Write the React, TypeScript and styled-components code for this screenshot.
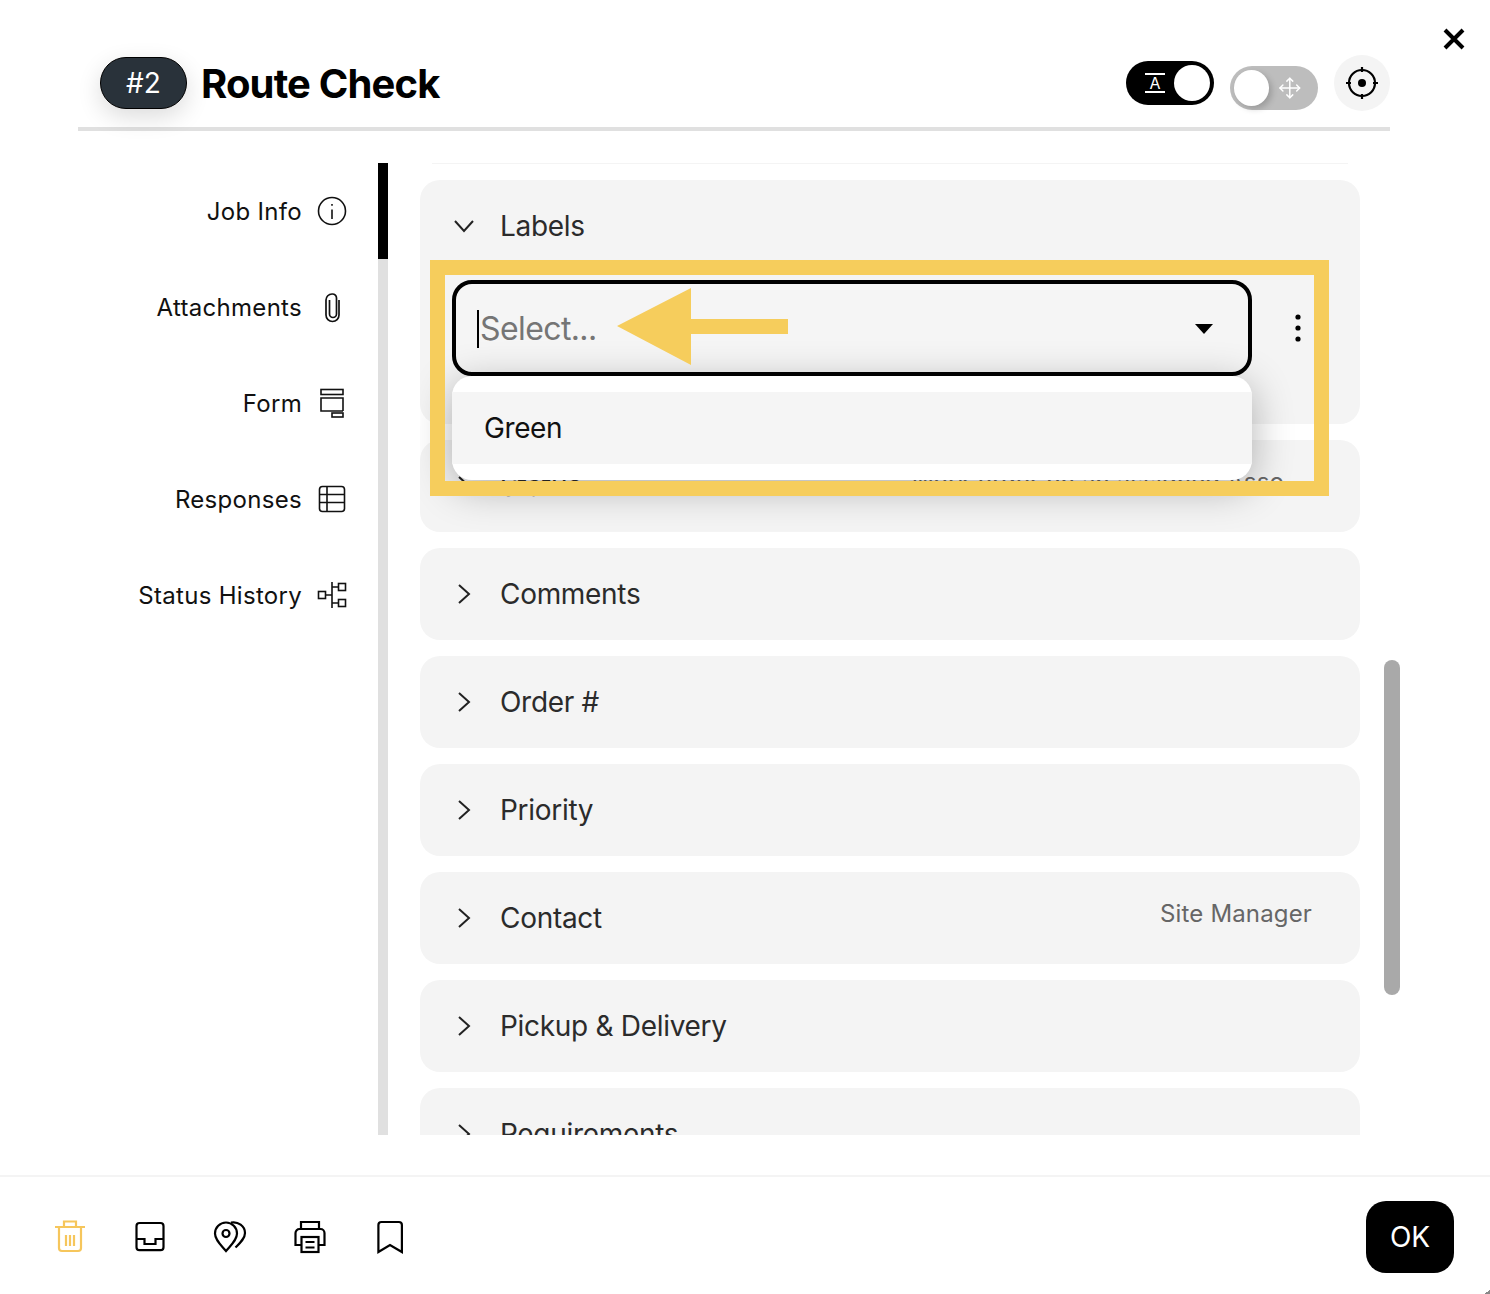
import React from 'react'
import styled, { createGlobalStyle } from 'styled-components'
import { Move } from 'lucide-react'

const GlobalStyle = createGlobalStyle`
  html, body {
    margin: 0;
    padding: 0;
    background: #fff;
  }
  * {
    box-sizing: border-box;
  }
`

const Page = styled.div`
  position: relative;
  width: 1490px;
  height: 1294px;
  overflow: hidden;
  background: #fff;
  color: #000;
  font-family: Inter, 'Liberation Sans', sans-serif;
`

const Header = styled.header`
  display: flex;
  align-items: flex-start;
  height: 131px;
  margin: 0 100px 0 78px;
  padding: 55px 0 0 22px;
  border-bottom: 4px solid #e0e0e0;
`

const Badge = styled.div`
  display: flex;
  align-items: center;
  justify-content: center;
  width: 87px;
  height: 52px;
  margin-top: 2px;
  border: 1px solid #000;
  border-radius: 26px;
  background: #29323a;
  box-shadow: 0 8px 24px rgba(0, 0, 0, 0.14);
  color: #fff;
  font-size: 28px;
`

const Title = styled.h1`
  flex: 1;
  margin: 1px 0 0 14px;
  font-size: 40px;
  line-height: 56px;
  font-weight: 700;
  letter-spacing: -0.85px;
`

const Controls = styled.div`
  display: flex;
  align-items: center;
  height: 56px;
`

const Toggle = styled.div<{ $on?: boolean }>`
  display: flex;
  align-items: center;
  justify-content: ${(p) => (p.$on ? 'flex-end' : 'space-between')};
  gap: 9px;
  width: 88px;
  height: 44px;
  margin-left: ${(p) => (p.$on ? '0' : '16px')};
  margin-top: ${(p) => (p.$on ? '0' : '10px')};
  padding: 0 ${(p) => (p.$on ? '4px' : '16px')} 0 4px;
  border-radius: 22px;
  background: ${(p) => (p.$on ? '#000' : '#bdbdbd')};
  color: #fff;
`

const Knob = styled.span<{ $raised?: boolean }>`
  width: 36px;
  height: 36px;
  border-radius: 50%;
  background: #fff;
  box-shadow: ${(p) => (p.$raised ? '3px 3px 6px rgba(0, 0, 0, 0.18)' : 'none')};
`

const TextMark = styled.span`
  display: block;
  width: 20px;
  height: 20px;
  border-top: 2px solid #fff;
  border-bottom: 2px solid #fff;
  font-size: 16px;
  line-height: 16px;
  text-align: center;
`

const RoundButton = styled.div`
  display: flex;
  align-items: center;
  justify-content: center;
  width: 56px;
  height: 56px;
  margin-left: 16px;
  border-radius: 50%;
  background: #f4f4f4;
`

const Close = styled.svg`
  position: absolute;
  top: 27px;
  right: 24px;
`

const Body = styled.div`
  display: flex;
  height: 972px;
  margin-top: 32px;
`

const Nav = styled.nav`
  width: 378px;
`

const NavItem = styled.div`
  display: flex;
  align-items: center;
  justify-content: flex-end;
  gap: 14px;
  height: 96px;
  padding-right: 30px;
  font-size: 24px;
  letter-spacing: 0.3px;
  color: #111;
`

const NavIcon = styled.svg`
  flex: none;
  width: 32px;
  height: 32px;
  fill: none;
  stroke: #111;
  stroke-width: 1.6;
`

const Track = styled.div`
  width: 10px;
  background: #e0e0e0;
`

const TrackThumb = styled.div`
  height: 96px;
  background: #000;
`

const Content = styled.div`
  width: 940px;
  margin-left: 32px;
  overflow: hidden;
  position: relative;
`

const Divider = styled.div`
  height: 1px;
  margin: 0 12px 16px;
  background: #f4f4f4;
`

const Card = styled.section`
  position: relative;
  margin-bottom: 16px;
  border-radius: 20px;
  background: #f4f4f4;
`

const CardHead = styled.div`
  display: flex;
  align-items: center;
  gap: 24px;
  height: 92px;
  padding: 0 48px 0 32px;
  font-size: 28px;
  letter-spacing: -0.3px;
  color: #2b2b2b;
`

const Chevron = styled.svg<{ $open?: boolean }>`
  flex: none;
  width: 24px;
  height: 24px;
  transform: rotate(${(p) => (p.$open ? '0deg' : '-90deg')});
`

const CardTitle = styled.span`
  flex: 1;
`

const CardValue = styled.span<{ $inset?: number }>`
  margin-top: -10px;
  margin-right: ${(p) => p.$inset || 0}px;
  font-size: 24px;
  letter-spacing: 0.15px;
  color: #666;
`

const SelectRow = styled.div`
  position: relative;
  display: flex;
  align-items: center;
  height: 152px;
  padding: 8px 0 48px 32px;
`

const SelectBox = styled.div`
  display: flex;
  align-items: center;
  justify-content: space-between;
  width: 800px;
  height: 96px;
  padding: 0 35px 0 21px;
  border: 4px solid #000;
  border-radius: 20px;
  background: #f5f5f5;
`

const Placeholder = styled.span`
  margin-top: 2px;
  padding-left: 1px;
  border-left: 2px solid #000;
  font-size: 32px;
  line-height: 38px;
  letter-spacing: -0.6px;
  color: #757575;
`

const CaretIcon = styled.svg`
  margin-top: 1px;
`

const DotsIcon = styled.svg`
  margin-left: 43px;
`

const Menu = styled.div`
  position: absolute;
  top: 104px;
  left: 32px;
  z-index: 2;
  width: 800px;
  height: 104px;
  padding: 16px 0;
  border-radius: 20px;
  background: #fff;
  box-shadow: 0 8px 40px rgba(0, 0, 0, 0.3);
`

const MenuOption = styled.div`
  display: flex;
  align-items: center;
  height: 72px;
  padding-left: 32px;
  background: #f5f5f5;
  font-size: 28px;
  letter-spacing: -0.4px;
  color: #111;
`

const ScrollRail = styled.div`
  width: 16px;
  margin-left: 24px;
  padding-top: 497px;
`

const ScrollThumb = styled.div`
  height: 335px;
  border-radius: 8px;
  background: #a9a9a9;
`

const Footer = styled.footer`
  display: flex;
  justify-content: space-between;
  height: 119px;
  margin-top: 40px;
  padding: 24px 36px 0 50px;
  border-top: 2px solid #f4f4f4;
`

const FooterIcons = styled.div`
  display: flex;
  align-items: center;
  gap: 40px;
  height: 72px;
`

const FooterIcon = styled.svg<{ $color?: string }>`
  width: 40px;
  height: 40px;
  fill: none;
  stroke: ${(p) => p.$color || '#000'};
  stroke-width: 2.2;
`

const OkButton = styled.button`
  width: 88px;
  height: 72px;
  border: 0;
  border-radius: 20px;
  background: #000;
  color: #fff;
  font-family: inherit;
  font-size: 28px;
`

const Frame = styled.div`
  position: absolute;
  top: 260px;
  left: 430px;
  z-index: 3;
  width: 899px;
  height: 236px;
  border: 15px solid #f6cd5c;
`

const Arrow = styled.svg`
  position: absolute;
  top: 280px;
  left: 610px;
  z-index: 3;
  fill: #f6cd5c;
`

const Grip = styled.div`
  position: absolute;
  right: 0;
  bottom: 0;
  width: 6px;
  height: 4px;
  background: linear-gradient(to bottom right, transparent 50%, #888 50%);
`

const navItems = [
  {
    label: 'Job Info',
    icon: (
      <>
        <circle cx="16" cy="16" r="13.5" />
        <path d="M16 14.500v9.500" />
        <path d="M16 9v1.800" />
      </>
    ),
  },
  {
    label: 'Attachments',
    icon: (
      <path d="M13.5 9v14a3.5 3.5 0 0 0 7 0V7a4 4 0 0 0-4-4h-.5a6 6 0 0 0-6 6v15a6.5 6.5 0 0 0 13 0V9" strokeWidth="1.7" />
    ),
  },
  {
    label: 'Form',
    icon: (
      <>
        <rect x="5" y="2.5" width="22" height="5" />
        <path d="M27 24V11H5v13h22" />
        <rect x="16" y="26" width="11" height="4" />
      </>
    ),
  },
  {
    label: 'Responses',
    icon: (
      <>
        <rect x="3.5" y="3.5" width="25" height="25" rx="3" />
        <path d="M3.5 11.5h25M3.5 19.5h25M11 3.5v25" />
      </>
    ),
  },
  {
    label: 'Status History',
    icon: (
      <>
        <rect x="2.5" y="12.5" width="7" height="7" />
        <rect x="22.5" y="4.5" width="7" height="7" />
        <rect x="22.5" y="20.5" width="7" height="7" />
        <path d="M16 3v26M9.5 16H16M16 8h6.500M16 24h6.500" />
      </>
    ),
  },
]

const cards = [
  { title: 'Status', value: 'Work order on an assigned Asso', inset: 28 },
  { title: 'Comments' },
  { title: 'Order #' },
  { title: 'Priority' },
  { title: 'Contact', value: 'Site Manager' },
  { title: 'Pickup & Delivery' },
  { title: 'Requirements' },
]

const ChevronIcon = ({ open }: { open?: boolean }) => (
  <Chevron $open={open} viewBox="0 0 24 24" fill="none" stroke="#222" strokeWidth="2">
    <path d="M3 7l9 10 9-10" />
  </Chevron>
)

const App = () => {
  return (
    <Page>
      <GlobalStyle />
      <Header>
        <Badge>#2</Badge>
        <Title>Route Check</Title>
        <Controls>
          <Toggle $on>
            <TextMark>A</TextMark>
            <Knob />
          </Toggle>
          <Toggle>
            <Knob $raised />
            <Move size={24} strokeWidth={1.5} />
          </Toggle>
          <RoundButton>
            <svg width="36" height="36" viewBox="0 0 36 36" fill="none" stroke="#000" strokeWidth="2.2">
              <circle cx="18" cy="18" r="13" />
              <circle cx="18" cy="18" r="4" fill="#000" stroke="none" />
              <path d="M18 2v5M18 29v5M2 18h5M29 18h5" />
            </svg>
          </RoundButton>
        </Controls>
      </Header>
      <Close width="24" height="24" viewBox="0 0 24 24" fill="none" stroke="#000" strokeWidth="4">
        <path d="M3 3l18 18M21 3L3 21" />
      </Close>

      <Body>
        <Nav>
          {navItems.map((item) => (
            <NavItem key={item.label}>
              {item.label}
              <NavIcon viewBox="0 0 32 32">{item.icon}</NavIcon>
            </NavItem>
          ))}
        </Nav>
        <Track>
          <TrackThumb />
        </Track>
        <Content>
          <Divider />
          <Card>
            <CardHead>
              <ChevronIcon open />
              <CardTitle>Labels</CardTitle>
            </CardHead>
            <SelectRow>
              <SelectBox>
                <Placeholder>Select...</Placeholder>
                <CaretIcon width="18" height="10" viewBox="0 0 18 10">
                  <path d="M0 0h18L9 10z" fill="#000" />
                </CaretIcon>
              </SelectBox>
              <DotsIcon width="6" height="28" viewBox="0 0 6 28" fill="#000">
                <circle cx="3" cy="3" r="2.600" />
                <circle cx="3" cy="14" r="2.600" />
                <circle cx="3" cy="25" r="2.600" />
              </DotsIcon>
              <Menu>
                <MenuOption>Green</MenuOption>
              </Menu>
            </SelectRow>
          </Card>
          {cards.map((card) => (
            <Card key={card.title}>
              <CardHead>
                <ChevronIcon />
                <CardTitle>{card.title}</CardTitle>
                {card.value && <CardValue $inset={card.inset}>{card.value}</CardValue>}
              </CardHead>
            </Card>
          ))}
        </Content>
        <ScrollRail>
          <ScrollThumb />
        </ScrollRail>
      </Body>

      <Footer>
        <FooterIcons>
          <FooterIcon $color="#f6c65c" viewBox="0 0 40 40">
            <path d="M5 10h30M14 10V4.500h12V10M9 10v21a3 3 0 0 0 3 3h16a3 3 0 0 0 3-3V10M16 18v11M20 18v11M24 18v11" />
          </FooterIcon>
          <FooterIcon viewBox="0 0 40 40">
            <rect x="6.500" y="6" width="27" height="27.200" rx="3" />
            <path d="M6.500 22h8v5h11v-5h8" />
          </FooterIcon>
          <FooterIcon viewBox="0 0 40 40">
            <path d="M16 34C11 28 5 23 5 16.500a11 11 0 0 1 22 0C27 23 21 28 16 34z" />
            <circle cx="16" cy="16.500" r="3.500" />
            <path d="M21 5.600c7-1.500 14 3.500 14 10.400 0 5.500-5 10-9.500 14.500" />
          </FooterIcon>
          <FooterIcon viewBox="0 0 40 40">
            <path d="M11 12V5h18v7" />
            <path d="M11 28H5.500V16a4 4 0 0 1 4-4h21a4 4 0 0 1 4 4v12H29" />
            <rect x="11.500" y="20" width="17" height="15" />
            <path d="M15.500 25h9M15.500 30.500h9" />
          </FooterIcon>
          <FooterIcon viewBox="0 0 40 40">
            <path d="M8.400 35V8a3 3 0 0 1 3-3h17.500a3 3 0 0 1 3 3v27L20 28z" />
          </FooterIcon>
        </FooterIcons>
        <OkButton>OK</OkButton>
      </Footer>

      <Frame />
      <Arrow width="180" height="90" viewBox="0 0 180 90">
        <path d="M7 46L81 8v31h97v15H81v31z" />
      </Arrow>
      <Grip />
    </Page>
  )
}

export default App
